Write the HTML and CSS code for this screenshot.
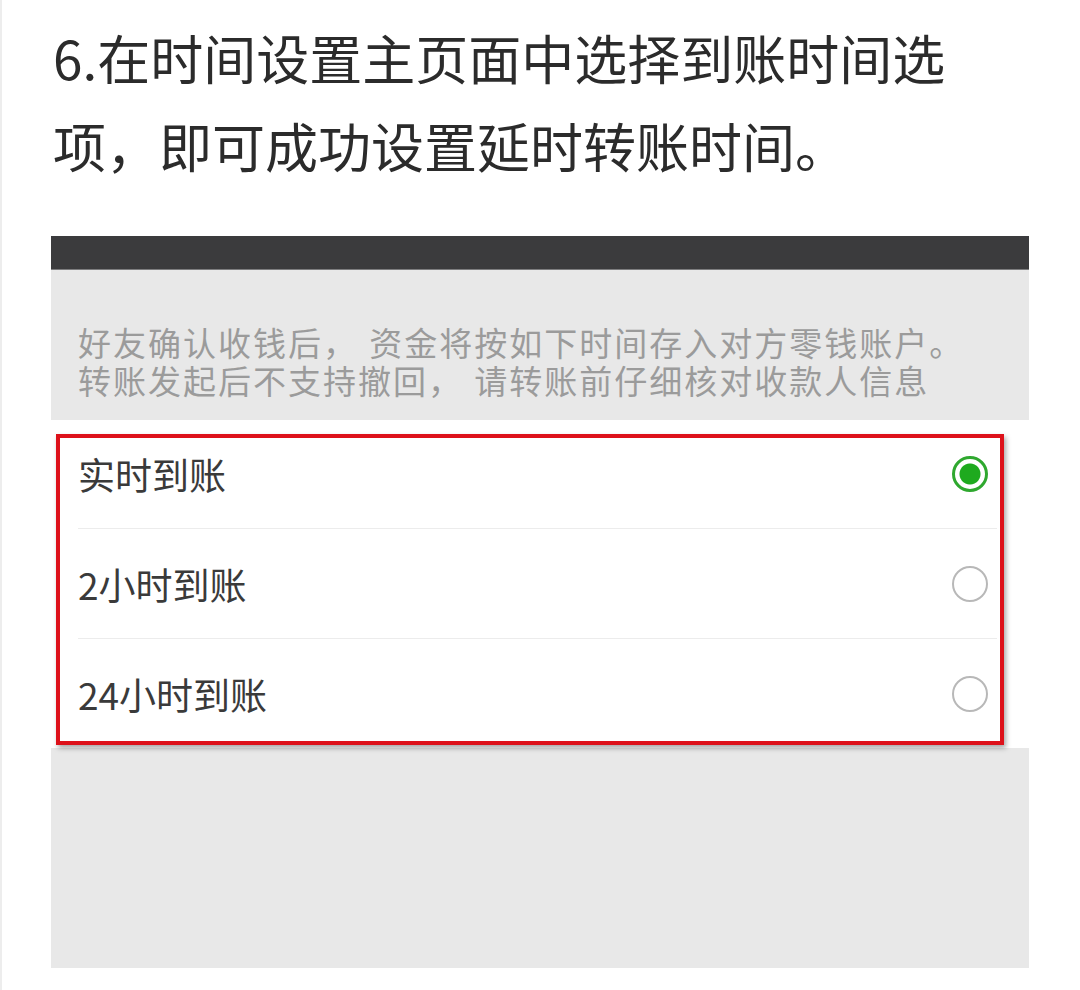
FILE: index.html
```html
<!DOCTYPE html>
<html lang="zh-CN">
<head>
    <meta charset="UTF-8">
    <meta name="viewport" content="width=device-width, initial-scale=1.0">
    <title>延时转账设置</title>
    <link rel="stylesheet" href="styles.css">
</head>
<body>
    <div class="article">
        <p class="step-text">6.在时间设置主页面中选择到账时间选项，即可成功设置延时转账时间。</p>

        <div class="shot">
            <div class="shot-topbar"></div>
            <div class="shot-notice">
                <div>好友确认收钱后， 资金将按如下时间存入对方零钱账户。</div>
                <div>转账发起后不支持撤回， 请转账前仔细核对收款人信息</div>
            </div>
            <div class="option-list">
                <div class="option-row">
                    <span class="option-label">实时到账</span>
                    <span class="radio checked"></span>
                </div>
                <div class="option-row">
                    <span class="option-label">2小时到账</span>
                    <span class="radio"></span>
                </div>
                <div class="option-row">
                    <span class="option-label">24小时到账</span>
                    <span class="radio"></span>
                </div>
                <div class="highlight-box"></div>
            </div>
            <div class="shot-rest"></div>
        </div>
    </div>
</body>
</html>
```

FILE: styles.css
```css
body {
    margin: 0;
    background: #ffffff;
    font-family: "Noto Sans CJK SC", "Noto Sans", sans-serif;
    color: #333333;
    border-left: 2px solid #ededed;
    min-height: 990px;
    box-sizing: border-box;
}
.article {
    padding: 13px 0 0 51px;
}
.step-text {
    margin: 0;
    width: 930px;
    font-size: 53px;
    line-height: 88px;
    color: #2b2b2b;
}
.shot {
    margin-top: 47px;
    width: 978px;
    margin-left: -2px;
    background: #e8e8e8;
}
.shot-topbar {
    height: 34px;
    background: #3b3b3d;
    border-bottom: 1px solid #7d7d7f;
    box-sizing: border-box;
}
.shot-notice {
    padding: 56px 0 18px 27px;
    font-family: "Liberation Sans", "Noto Sans CJK SC", sans-serif;
    font-size: 33px;
    line-height: 38px;
    letter-spacing: 2px;
    color: #9b9b9b;
}
.option-list {
    position: relative;
    background: #ffffff;
}
.option-row {
    display: flex;
    align-items: center;
    justify-content: space-between;
    height: 109px;
    margin: 0 32px 0 27px;
    padding-right: 9px;
    border-top: 1px solid #ececec;
}
.option-row:first-child {
    border-top: none;
    height: 108px;
}
.option-label {
    font-size: 37px;
    color: #3a3a3a;
}
.radio {
    width: 36px;
    height: 36px;
    border-radius: 50%;
    border: 2px solid #b8b8b8;
    box-sizing: border-box;
}
.radio.checked {
    border: 3px solid #2fa82f;
    background: radial-gradient(circle, #1eaa1e 0 10px, #ffffff 11px);
}
.highlight-box {
    position: absolute;
    left: 5px;
    top: 14px;
    width: 948px;
    height: 311px;
    border: 4px solid #dd111a;
    box-sizing: border-box;
    box-shadow: 2px 3px 5px rgba(0, 0, 0, 0.35);
    pointer-events: none;
}
.shot-rest {
    height: 220px;
}
```
